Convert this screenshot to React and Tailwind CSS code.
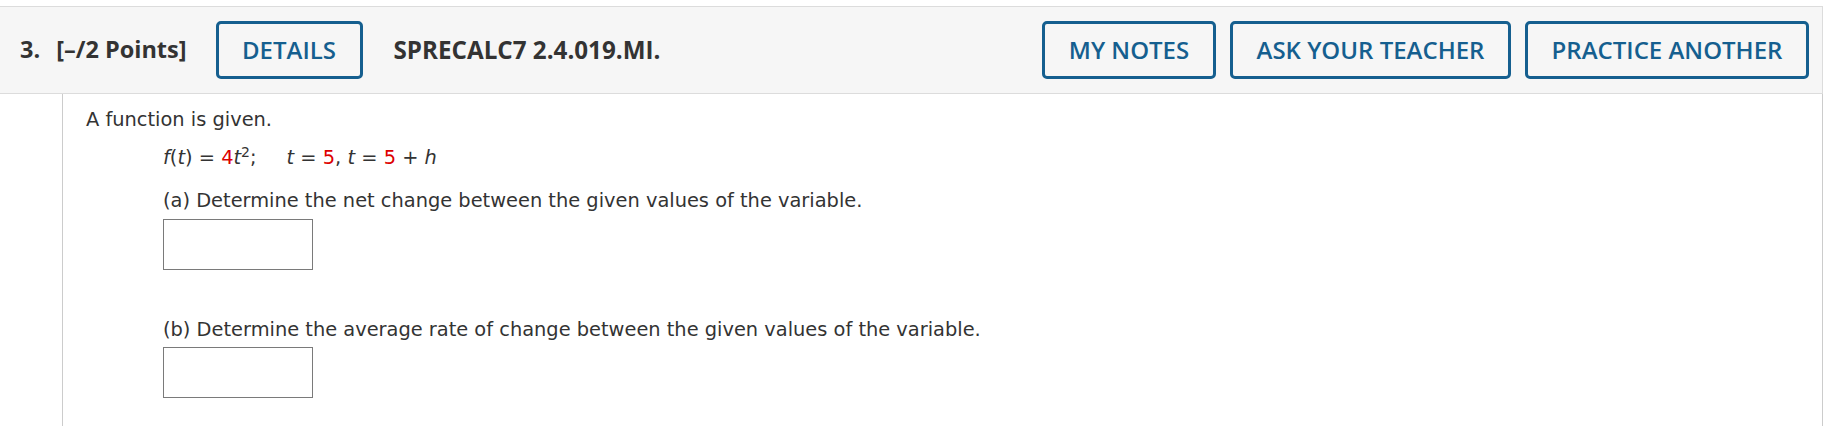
import React from 'react';

const btn =
  "h-[58px] rounded-[5px] border-[3px] border-[#155f8f] px-[20px] text-[24px] font-semibold text-[#155f8f] font-['Open_Sans',sans-serif] leading-none";

const Red = ({ children }) => <span className="text-[#dd0000]">{children}</span>;

const App = () => {
  return (
    <div className="h-[426px] w-[1826px] overflow-hidden bg-white">
      <div className="mt-[6px] flex h-[88px] w-[1823px] items-center border-y border-r border-[#dcdcdc] bg-[#f6f6f6] font-['Open_Sans',sans-serif] text-[#333333]">
        <span className="ml-[20px] text-[23.5px] font-bold">3.</span>
        <span className="ml-[16px] text-[23.5px] font-bold">[–/2 Points]</span>
        <button className={btn + ' ml-[29px] w-[147px]'}>DETAILS</button>
        <span className="ml-[31px] text-[24.2px] font-bold">SPRECALC7 2.4.019.MI.</span>
        <div className="ml-auto mr-[13px] flex gap-[14px]">
          <button className={btn + ' w-[174px]'}>MY NOTES</button>
          <button className={btn + ' w-[281px]'}>ASK YOUR TEACHER</button>
          <button className={btn + ' w-[284px]'}>PRACTICE ANOTHER</button>
        </div>
      </div>

      <div className="flex">
        <div className="w-[62px] shrink-0" />
        <div className="h-[340px] w-[1761px] border-x border-[#cccccc] pl-[23px] pt-[14px] font-['DejaVu_Sans',Verdana,sans-serif] text-[19.4px] leading-[24px] text-[#333333]">
          <p>A function is given.</p>
          <div className="ml-[77px] mt-[14px]">
            <p>
              <i>f</i>(<i>t</i>) = <Red>4</Red>
              <i>t</i>
              <sup className="text-[14px]">2</sup>;<span className="inline-block w-[30px]" />
              <i>t</i> = <Red>5</Red>, <i>t</i> = <Red>5</Red> + <i>h</i>
            </p>
            <p className="mt-[19px]">(a) Determine the net change between the given values of the variable.</p>
            <div className="mt-[6px] h-[51px] w-[150px] border border-[#7a7a7a] bg-white" />
            <p className="mt-[48px]">(b) Determine the average rate of change between the given values of the variable.</p>
            <div className="mt-[5px] h-[51px] w-[150px] border border-[#7a7a7a] bg-white" />
          </div>
        </div>
      </div>
    </div>
  );
};

export default App;
